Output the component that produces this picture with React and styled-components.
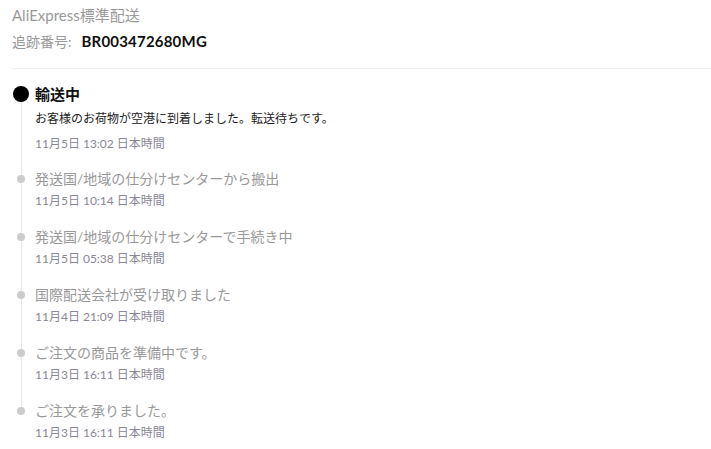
import React from 'react'
import styled, { createGlobalStyle } from 'styled-components'

const GlobalStyle = createGlobalStyle`
  html, body {
    margin: 0;
    padding: 0;
    background: #fff;
  }
  body {
    font-family: Lato, "Noto Sans CJK JP", sans-serif;
    -webkit-font-smoothing: antialiased;
  }
`

const Page = styled.div`
  padding: 2px 0 0 12px;
`

const Header = styled.header`
  padding-bottom: 13px;
  border-bottom: 1px solid #f0f0f0;
`

const Carrier = styled.div`
  font-size: 15px;
  line-height: 26px;
  color: #999;
`

const TrackingRow = styled.div`
  font-size: 14px;
  line-height: 26px;
  color: #999;
`

const TrackingNo = styled.span`
  margin-left: 10px;
  font-size: 15px;
  font-weight: 700;
  letter-spacing: 0.2px;
  color: #111;
`

const Timeline = styled.ol`
  list-style: none;
  margin: 14px 0 0;
  padding: 0;
`

const Item = styled.li`
  display: grid;
  grid-template-columns: 18px 1fr;
  column-gap: 5px;
`

const Marker = styled.div`
  display: flex;
  flex-direction: column;
  align-items: center;
`

const Rail = styled.span`
  width: 1px;
  background: ${p => (p.$hidden ? 'transparent' : '#e6e6e6')};
  flex: ${p => (p.$grow ? '1 1 auto' : '0 0 auto')};
  height: ${p => (p.$grow ? 'auto' : `${p.$h}px`)};
`

const Dot = styled.span`
  flex: 0 0 auto;
  width: ${p => (p.$active ? 16 : 8)}px;
  height: ${p => (p.$active ? 16 : 8)}px;
  border-radius: 50%;
  background: ${p => (p.$active ? '#000' : '#ccc')};
`

const Body = styled.div`
  padding-bottom: ${p => (p.$active ? 15 : 16)}px;
`

const Status = styled.div`
  font-size: ${p => (p.$active ? 15 : 14)}px;
  font-weight: ${p => (p.$active ? 700 : 400)};
  line-height: ${p => (p.$active ? 22 : 20)}px;
  color: ${p => (p.$active ? '#111' : '#999')};
`

const Detail = styled.div`
  margin-top: 4px;
  font-size: 12px;
  line-height: 20px;
  color: #222;
`

const Time = styled.div`
  margin-top: ${p => (p.$active ? 5 : 2)}px;
  font-size: 12px;
  line-height: 20px;
  color: #8a8796;
`

const events = [
  {
    status: '輸送中',
    detail: 'お客様のお荷物が空港に到着しました。転送待ちです。',
    time: '11月5日 13:02 日本時間',
    active: true
  },
  { status: '発送国/地域の仕分けセンターから搬出', time: '11月5日 10:14 日本時間' },
  { status: '発送国/地域の仕分けセンターで手続き中', time: '11月5日 05:38 日本時間' },
  { status: '国際配送会社が受け取りました', time: '11月4日 21:09 日本時間' },
  { status: 'ご注文の商品を準備中です。', time: '11月3日 16:11 日本時間' },
  { status: 'ご注文を承りました。', time: '11月3日 16:11 日本時間' }
]

const App = () => (
  <Page>
    <GlobalStyle />
    <Header>
      <Carrier>AliExpress標準配送</Carrier>
      <TrackingRow>
        追跡番号:<TrackingNo>BR003472680MG</TrackingNo>
      </TrackingRow>
    </Header>
    <Timeline>
      {events.map((e, i) => (
        <Item key={i}>
          <Marker>
            <Rail $h={e.active ? 3 : 6} $hidden={i === 0} />
            <Dot $active={e.active} />
            <Rail $grow $hidden={i === events.length - 1} />
          </Marker>
          <Body $active={e.active}>
            <Status $active={e.active}>{e.status}</Status>
            {e.detail && <Detail>{e.detail}</Detail>}
            <Time $active={e.active}>{e.time}</Time>
          </Body>
        </Item>
      ))}
    </Timeline>
  </Page>
)

export default App
